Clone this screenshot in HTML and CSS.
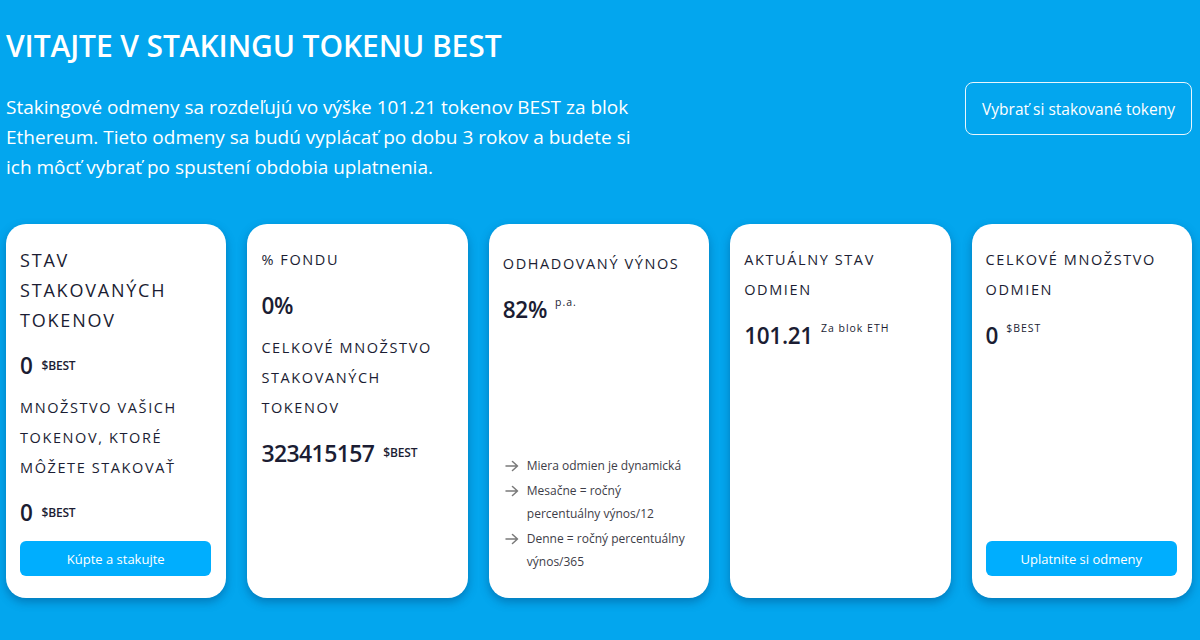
FILE: index.html
```html
<!DOCTYPE html>
<html lang="sk">
<head>
<meta charset="utf-8">
<title>Staking BEST</title>
<link rel="stylesheet" href="styles.css">
</head>
<body>
<div class="page">
  <h1 class="title">VITAJTE V STAKINGU TOKENU BEST</h1>
  <div class="intro">
    <p class="lead">Stakingové odmeny sa rozdeľujú vo výške 101.21 tokenov BEST za blok Ethereum. Tieto odmeny sa budú vyplácať po dobu 3 rokov a budete si ich môcť vybrať po spustení obdobia uplatnenia.</p>
    <button class="btn-outline">Vybrať si stakované tokeny</button>
  </div>
  <div class="cards">
    <div class="card">
      <h2 class="card-title big">STAV STAKOVANÝCH TOKENOV</h2>
      <div class="value"><span class="num">0</span><span class="unit">$BEST</span></div>
      <h3 class="card-title sub">MNOŽSTVO VAŠICH TOKENOV, KTORÉ MÔŽETE STAKOVAŤ</h3>
      <div class="value v2"><span class="num">0</span><span class="unit">$BEST</span></div>
      <button class="btn-fill">Kúpte a stakujte</button>
    </div>
    <div class="card">
      <h2 class="card-title">% FONDU</h2>
      <div class="value"><span class="num">0%</span></div>
      <h3 class="card-title sub">CELKOVÉ MNOŽSTVO STAKOVANÝCH TOKENOV</h3>
      <div class="value v2"><span class="num lg">323415157</span><span class="unit">$BEST</span></div>
    </div>
    <div class="card card-notes">
      <h2 class="card-title shift">ODHADOVANÝ VÝNOS</h2>
      <div class="value"><span class="num">82%</span><sup class="sup">p.a.</sup></div>
      <ul class="notes">
        <li><svg class="arrow" viewBox="0 0 14 12" width="14" height="12"><path d="M1 6h11.5M7.5 1.5 12.5 6l-5 4.5" fill="none" stroke="#7a7a7a" stroke-width="1.5" stroke-linecap="round" stroke-linejoin="round"/></svg><span>Miera odmien je dynamická</span></li>
        <li><svg class="arrow" viewBox="0 0 14 12" width="14" height="12"><path d="M1 6h11.5M7.5 1.5 12.5 6l-5 4.5" fill="none" stroke="#7a7a7a" stroke-width="1.5" stroke-linecap="round" stroke-linejoin="round"/></svg><span>Mesačne = ročný percentuálny výnos/12</span></li>
        <li><svg class="arrow" viewBox="0 0 14 12" width="14" height="12"><path d="M1 6h11.5M7.5 1.5 12.5 6l-5 4.5" fill="none" stroke="#7a7a7a" stroke-width="1.5" stroke-linecap="round" stroke-linejoin="round"/></svg><span>Denne = ročný percentuálny výnos/365</span></li>
      </ul>
    </div>
    <div class="card">
      <h2 class="card-title">AKTUÁLNY STAV ODMIEN</h2>
      <div class="value"><span class="num">101.21</span><sup class="sup">Za blok ETH</sup></div>
    </div>
    <div class="card">
      <h2 class="card-title">CELKOVÉ MNOŽSTVO ODMIEN</h2>
      <div class="value"><span class="num">0</span><sup class="sup">$BEST</sup></div>
      <button class="btn-fill">Uplatnite si odmeny</button>
    </div>
  </div>
</div>
</body>
</html>
```

FILE: styles.css
```css
* { box-sizing: border-box; }
html, body { margin: 0; padding: 0; }
body {
  background: #03a6ee;
  font-family: "Open Sans", "DejaVu Sans", sans-serif;
  color: #1b1d33;
  height: 640px;
  overflow: hidden;
}
.page { padding: 26px 8px 0 6px; }
.title {
  margin: 0;
  font-size: 30px;
  line-height: 40px;
  font-weight: 600;
  color: #fff;
  letter-spacing: -0.1px;
}
.intro {
  display: flex;
  justify-content: space-between;
  align-items: flex-start;
  margin-top: 16px;
}
.lead {
  margin: 10px 0 0;
  max-width: 652px;
  color: #fff;
  font-size: 19px;
  line-height: 30px;
  letter-spacing: 0;
}
.btn-outline {
  margin-right: 0;
  width: 227px;
  height: 53px;
  background: transparent;
  border: 1.5px solid #e8f6fd;
  border-radius: 8px;
  color: #fff;
  font-family: inherit;
  font-size: 15.5px;
  font-weight: 500;
  letter-spacing: 0;
}
.cards {
  display: grid;
  grid-template-columns: repeat(5, 1fr);
  gap: 21px;
  margin-top: 42px;
}
.card {
  background: #fff;
  border-radius: 20px;
  height: 374px;
  padding: 21px 15px 22px 14px;
  display: flex;
  flex-direction: column;
  box-shadow: 0 4px 10px rgba(0, 40, 90, 0.35);
}
.card.card-notes { padding-bottom: 25px; }
.card-title {
  margin: 0;
  font-size: 14.5px;
  line-height: 30px;
  font-weight: 500;
  letter-spacing: 1.6px;
  color: #1b1d33;
}
.card-title.big { font-size: 18px; letter-spacing: 1.8px; }
.card-title.sub { margin-top: 12px; }
.card-title.shift { margin-top: 4px; }
.value {
  margin-top: 16px;
  line-height: 30px;
  display: flex;
  align-items: center;
}
.value.v2 { margin-top: 15px; }
.num {
  font-size: 22.5px;
  font-weight: 550;
  color: #1b1d33;
  letter-spacing: -0.3px;
}
.num.lg { font-size: 23px; letter-spacing: -0.6px; }
.unit {
  font-size: 12px;
  font-weight: 600;
  margin-left: 9px;
  letter-spacing: -0.2px;
}
.sup {
  align-self: flex-start;
  font-size: 10.5px;
  line-height: 14px;
  font-weight: 500;
  letter-spacing: 1px;
  margin-left: 8px;
  margin-top: 0;
}
.btn-fill {
  margin-top: auto;
  height: 35px;
  width: 100%;
  border: none;
  border-radius: 6px;
  background: #00aefe;
  color: #fff;
  font-family: inherit;
  font-size: 13px;
  font-weight: 500;
}
.notes {
  list-style: none;
  margin: auto 0 0;
  padding: 0 0 0 2px;
}
.notes li {
  display: flex;
  align-items: flex-start;
  font-size: 12px;
  line-height: 23px;
  color: #3d3d48;
  margin-top: 2px;
}
.arrow { flex: none; margin: 6px 8px 0 0; }
```
